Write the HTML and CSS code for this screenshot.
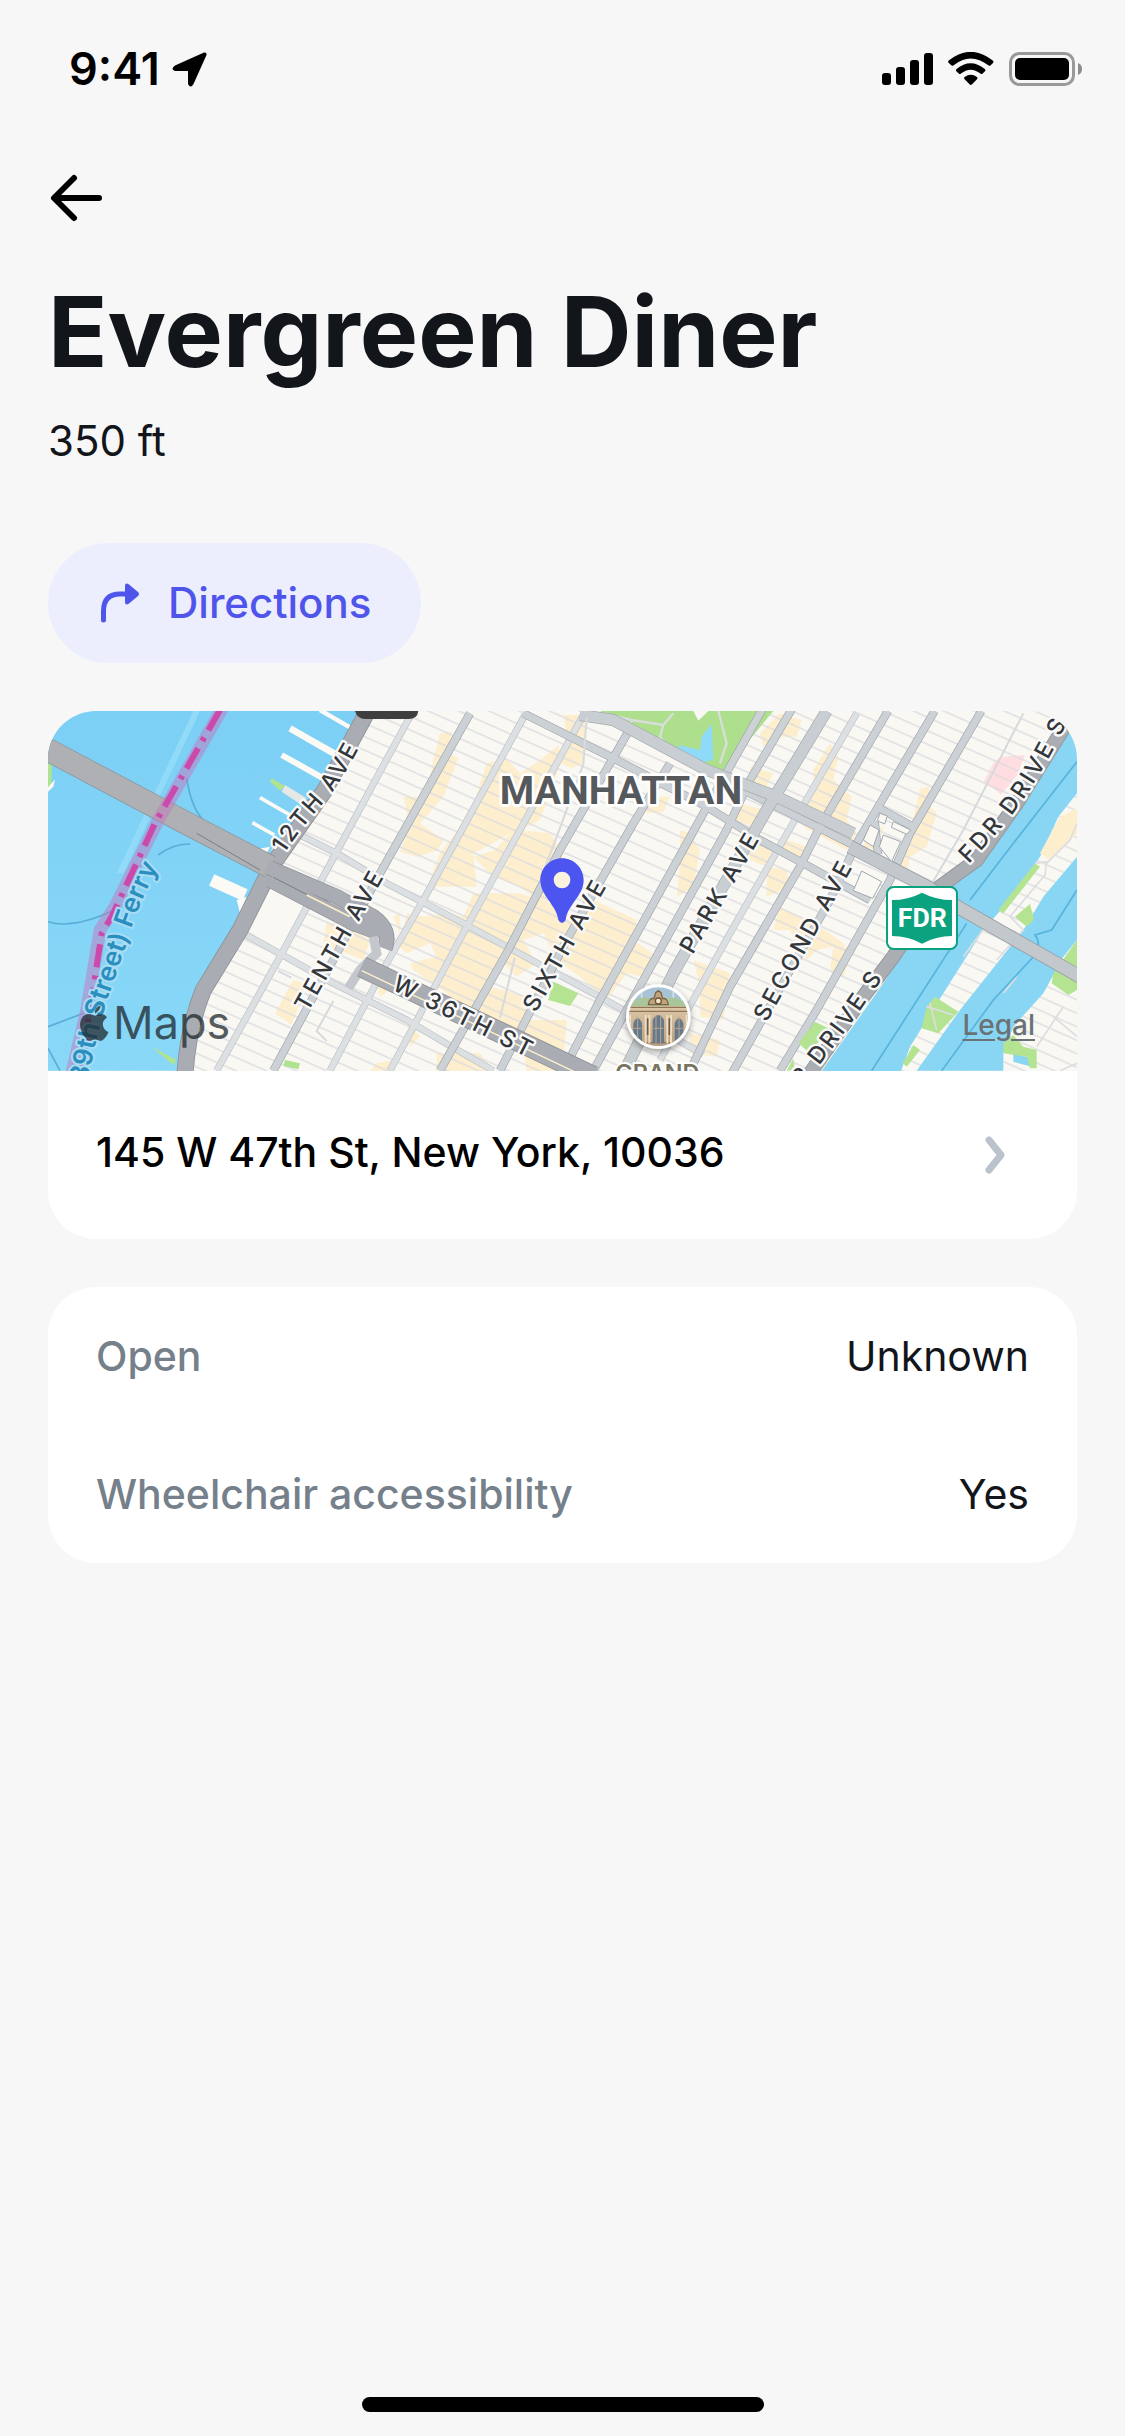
FILE: index.html
```html
<!DOCTYPE html>
<html lang="en">
<head>
<meta charset="utf-8">
<meta name="viewport" content="width=device-width, initial-scale=1">
<title>Evergreen Diner</title>
<link rel="stylesheet" href="styles.css">
</head>
<body>
<div class="screen">
  <header class="status">
    <div class="status-side">
      <span class="clock">9:41</span>
      <svg width="36" height="36" viewBox="0 0 36 36" aria-hidden="true"><path d="M3 14.500 32 1.500Q35 1 34.500 4L21.500 33Q18.500 38 16 33V20H3Q-2 18 3 14.500Z"/></svg>
    </div>
    <div class="status-side status-icons">
      <svg width="51" height="32" viewBox="0 0 51 32" aria-hidden="true"><rect y="20" width="9" height="12" rx="3"/><rect x="14" y="14" width="9" height="18" rx="3"/><rect x="28" y="7" width="9" height="25" rx="3"/><rect x="42" width="9" height="32" rx="3"/></svg>
      <svg width="46" height="34" viewBox="0 0 46 34" aria-hidden="true"><path d="M.7 8.600Q22.500-9 44.800 8.600Q46 9.800 45 11L42.400 13.500Q41.500 14.300 40.400 13.300Q22.500-.500 5.600 13.300Q4.600 14.300 3.600 13.500L.8 11Q-.4 9.800.7 8.600ZM8.600 17Q22.500 5.500 36.800 17Q38 18.200 37 19.300L34.400 21.800Q33.500 22.500 32.400 21.600Q22.500 14 13 21.600Q12 22.500 11 21.800L8.600 19.500Q7.400 18.200 8.600 17ZM16.600 25Q22.800 20.500 29 25Q30 26.200 29 27.300L23.800 32.500Q22.800 33.400 21.800 32.500L16.600 27.300Q15.600 26.200 16.600 25Z"/></svg>
      <svg width="73" height="34" viewBox="0 0 73 34" aria-hidden="true"><rect x="1.500" y="1.500" width="63" height="31" rx="9" fill="none" stroke="#999" stroke-width="3"/><rect x="6" y="6" width="54" height="22" rx="5"/><path d="M69 11Q73 12.500 73 17T69 23Z" fill="#8c8c8c"/></svg>
    </div>
  </header>

  <main class="content">
    <button class="back" type="button" aria-label="Back">
      <svg width="54" height="54" viewBox="0 0 54 54" aria-hidden="true"><path d="M26 7 6 27l20 20M7 27h44" fill="none" stroke="#000" stroke-width="6" stroke-linecap="round" stroke-linejoin="round"/></svg>
    </button>
    <h1 class="title">Evergreen Diner</h1>
    <p class="distance">350 ft</p>

    <button class="directions" type="button">
      <svg width="42" height="42" viewBox="0 0 42 42" aria-hidden="true"><path d="M5.500 38V29Q5.500 12 22 12H29" fill="none" stroke="currentColor" stroke-width="5" stroke-linecap="round"/><path d="M27 4Q27 0 31 2.500L40 10Q42 12 40 14L31 21.500Q27 24 27 20Z" fill="currentColor"/></svg>
      <span>Directions</span>
    </button>

    <section class="card place" aria-label="Location">
      <div class="map">
        <svg class="map-art" viewBox="0 0 3087 1080" preserveAspectRatio="xMidYMid slice" role="img" aria-label="Map of Manhattan">
          <defs>
            <pattern id="blocks" width="60" height="37" patternUnits="userSpaceOnUse" patternTransform="rotate(24)"><path d="M0 17H60" stroke="#dcdbe0" stroke-width="4"/></pattern>
            <linearGradient id="river" x1="0" y1="0" x2="0" y2="1"><stop offset="0" stop-color="#7ccff5"/><stop offset="1" stop-color="#89d8f8"/></linearGradient>
            <linearGradient id="stone" x1="0" y1="0" x2="0" y2="1"><stop offset="0" stop-color="#dcc7a6"/><stop offset="1" stop-color="#b99c7e"/></linearGradient>
            <clipPath id="badge"><circle cx="835" cy="950" r="88"/></clipPath>
            <filter id="drop" x="-30%" y="-30%" width="160%" height="160%"><feDropShadow dx="0" dy="8" stdDeviation="9" flood-opacity=".4"/></filter>
            <path id="ave12" d="M732 462Q785 382 850 310Q910 240 970 118L1000 50"/>
            <path id="aveTenth" d="M803 938 1080 446"/>
            <path id="ferry" d="M143 1152Q178 960 212 870L262 725Q290 620 372 466L400 410"/>
            <path id="w36" d="M34 868 520 1112"/>
            <path id="aveSixth" d="M468 940 750 434"/>
            <path id="avePark" d="M938 765 1190 330"/>
            <path id="aveSecond" d="M110 968 430 390"/>
            <path id="fdrNorth" d="M716 492Q790 415 850 340Q940 220 1015 60L1060-40"/>
            <path id="fdrSouth" d="M216 1162Q310 1045 385 940L530 730"/>
          </defs>
          <rect width="3087" height="1080" fill="#f9f8f3"/>

          <!-- commercial blocks -->
          <g fill="#fdeecd" transform="translate(996 -33)">
            <path d="M180 100 215 95 205 160 235 175 190 290 120 370 190 420 175 450 110 470 60 455 90 380 70 290 140 290 160 180Z"/>
            <path d="M320 190 380 175 420 220 480 180 535 135 545 180 480 360 420 390 510 400 550 460 500 620 420 560 340 530 280 470 345 450 390 400 320 440 280 460 290 560 170 560 130 590 180 460 250 370 280 320 300 250Z"/>
            <path d="M550 45 620 45 615 100 610 190 575 205 540 190 560 100Z"/>
            <path d="M280 580 420 580 540 620 600 670 640 600 770 660 760 720 830 770 790 830 740 820 680 900 600 830 530 780 490 700 430 720 470 790 410 830 370 790 330 860 440 890 450 960 560 960 550 1090 640 1112 440 1112 430 1050 300 980 200 880 100 810 90 790 170 770 150 730 80 760 60 740 80 640 130 650 200 640 250 650Z"/>
            <path d="M900 390 930 400 960 450 940 560 890 590 900 490ZM800 290 870 290 850 335 800 340ZM940 780 1050 820 1030 960 960 950 960 860ZM930 1000 1020 1020 1010 1070 930 1060ZM80 960 120 1010 90 1040ZM170 1060 300 1060 340 1112 170 1112Z"/>
          </g>
          <g fill="#fdeecd">
            <path transform="translate(-24 -33)" d="M860 670 900 670 990 720 970 780 920 760 850 730ZM760 840 800 850 780 910 755 975 705 940ZM1060 650 1080 640 1080 700ZM1010 1090 1060 1080 1050 1112 990 1112ZM1010 850 1050 870 1020 890Z"/>
            <path transform="translate(2046 -33)" d="M150 40 215 60 200 110 150 110 100 140 90 100ZM300 130 325 170 310 240 365 290 350 360 380 400 350 450 220 380 210 320 250 290 250 210ZM60 200 130 220 110 260 60 240ZM20 310 110 330 80 380 10 360ZM570 265 600 260 590 310 620 340 590 440 540 470 530 520 490 510 540 400ZM110 500 170 510 180 560 110 590ZM150 620 270 680 340 730 360 770 340 830 300 810 310 740 260 750 230 780 180 690 130 690ZM170 420 230 440 210 470 150 450ZM410 400 460 380 440 450 400 440ZM60 430 130 440 110 500 60 480Z"/>
          </g>
          <path fill="#ffdde0" d="M2855 138 2930 132 2910 190 2860 250 2807 213 2835 158Z"/>
          <rect width="3087" height="1080" fill="url(#blocks)"/>
          <path fill="#f9f8f3" d="M655 530 770 600 700 740 590 670Z"/>

          <!-- parks -->
          <g transform="translate(996 -33)">
            <path fill="#addf8d" d="M660 33H1180L1030 215 980 215 740 90Z"/>
            <path fill="#8fdaf8" d="M895 135 960 150 965 110 995 72 1000 180 960 188 900 160Z"/>
            <path fill="none" stroke="#d9dedb" stroke-width="7" d="M670 40 755 60 850 75 880 40M755 60 745 95M850 75 840 110 875 160M1015 33 1040 130 1020 190"/>
            <path fill="#f9f8f3" d="M940 33H985L955 62Z"/>
            <path fill="#b4e392" d="M520 845 595 880 570 918 505 900Z"/>
          </g>

          <!-- avenues and cross streets -->
          <g fill="none" stroke-linejoin="round">
            <g stroke="#bdc2c7" stroke-width="21">
              <path d="M1086 17 996 182 861 432 696 737 506 1079"/>
              <path d="M1431 12 1126 567 1016 757 846 1079"/>
              <path d="M1606 12 1256 647 1026 1079"/>
              <path d="M2426 7 2246 317 2046 667 1836 1047"/>
              <path d="M696 342 866 427 1016 517 1246 637 1636 847 1966 1030"/>
              <path d="M586 667 856 817 1076 927 1211 1007 1336 1079"/>
            </g>
            <g stroke="#dce0e3" stroke-width="17">
              <path d="M1086 17 996 182 861 432 696 737 506 1079"/>
              <path d="M1431 12 1126 567 1016 757 846 1079"/>
              <path d="M1606 12 1256 647 1026 1079"/>
              <path d="M2426 7 2246 317 2046 667 1836 1047"/>
              <path d="M696 342 866 427 1016 517 1246 637 1636 847 1966 1030"/>
              <path d="M586 667 856 817 1076 927 1211 1007 1336 1079"/>
            </g>
            <g stroke="#a0a6ac" stroke-width="25">
              <path d="M1266 7 996 487 926 617 676 1079"/>
              <path d="M1741 62 1536 417 1381 717 1176 1079"/>
              <path d="M1866 157 1756 337 1556 687 1356 1079"/>
              <path d="M2146-10 1966 307 1656 867 1546 1079"/>
              <path d="M2231-5 2106 207 2036 357 1736 897 1636 1079"/>
              <path d="M2520 0 2316 347 2256 467 2046 827 1926 1079"/>
              <path d="M2660 0 2426 397 2346 567 2050 1090"/>
              <path d="M2800 0 2586 367 2526 507 2306 897 2196 1079"/>
              <path d="M1426 7 1706 147 1976 287 2136 387 2266 457 2466 567M2086 237 2286 337 2426 407M2490 290 2600 350M2480 330 2490 430"/>
            </g>
            <g stroke="#ccd1d5" stroke-width="21">
              <path d="M1266 7 996 487 926 617 676 1079"/>
              <path d="M1741 62 1536 417 1381 717 1176 1079"/>
              <path d="M1866 157 1756 337 1556 687 1356 1079"/>
              <path d="M2146-10 1966 307 1656 867 1546 1079"/>
              <path d="M2231-5 2106 207 2036 357 1736 897 1636 1079"/>
              <path d="M2520 0 2316 347 2256 467 2046 827 1926 1079"/>
              <path d="M2660 0 2426 397 2346 567 2050 1090"/>
              <path d="M2800 0 2586 367 2526 507 2306 897 2196 1079"/>
              <path d="M1426 7 1706 147 1976 287 2136 387 2266 457 2466 567M2086 237 2286 337 2426 407M2490 290 2600 350M2480 330 2490 430"/>
            </g>
            <path stroke="#a3a8ae" stroke-width="36" d="M2336 0 2156 297 1876 787 1730 1079M1596 12 1696 27 1976 177 2186 257 2416 367"/>
            <path stroke="#c9ced2" stroke-width="32" d="M2336 0 2156 297 1876 787 1730 1079M1596 12 1696 27 1976 177 2186 257 2416 367"/>
            <path stroke="#d8d9dd" stroke-width="6" d="M2926 7 2746 357 2646 527 2600 640M1616 20 1606 160 1540 340 1480 500M1400 740 1356 920M856 870 806 960 836 990M690 780 730 800M2300 1000 2400 900"/>
          </g>

          <!-- Hudson side -->
          <g transform="translate(-24 -33)">
            <path fill="url(#river)" d="M24 33H970L930 90 850 260 700 440 640 560 590 660 480 870 410 1112H24Z"/>
            <path fill="#9adef9" d="M460 33 480 33 250 520 230 520Z" opacity=".7"/>
            <g stroke="#fbfaf5" fill="none">
              <path stroke-width="13" d="M840 30 935 85"/><path stroke-width="20" d="M750 85 890 165"/>
              <path stroke-width="18" d="M725 165 850 235"/><path stroke-width="11" d="M660 293 750 345M637 368 703 405"/>
              <path stroke-width="38" d="M515 540 615 585"/>
            </g>
            <path fill="#e6e8e6" d="M735 255 800 295 785 315 725 275Z"/><path fill="#b0e38f" d="M695 235 735 258 720 272 690 245ZM335 1040 410 1080 400 1095ZM24 190 36 195 34 260 24 260ZM735 1080 780 1090 775 1108 730 1098Z"/>
            <path fill="#fbfaf5" d="M640 450 690 440 670 480ZM590 600 620 590 600 640ZM24 262 45 238 40 260 24 275Z"/>
            <g fill="none" stroke="#5badd8" stroke-width="5"><path d="M440 235Q455 330 495 365M450 432Q400 430 355 465M24 665Q100 690 235 625M24 980 130 940M24 1045 60 1112"/></g>
            <path fill="none" stroke="#8c9096" stroke-width="51" d="M990 20 855 270 700 490 600 690 490 870Q445 980 435 1120"/>
            <path fill="none" stroke="#a9acb2" stroke-width="46" d="M990 20 855 270 700 490 600 690 490 870Q445 980 435 1120"/>
            <path fill="none" stroke="#8c9096" stroke-width="70" d="M15 145 440 370 690 500"/>
            <path fill="none" stroke="#8c9096" stroke-width="46" d="M680 500 890 590 1000 650Q1055 690 1035 745M690 540 940 670 1020 700"/>
            <path fill="none" stroke="#aeb0b4" stroke-width="66" d="M15 145 440 370 690 500"/>
            <path fill="none" stroke="#a9acb2" stroke-width="42" d="M680 500 890 590 1000 650Q1055 690 1035 745M690 540 940 670 1020 700"/>
            <path fill="none" stroke="#797d82" stroke-width="3" d="M470 400 660 510M700 532 940 655"/>
            <path fill="none" stroke="#fcf2cf" stroke-width="5" d="M800 585 930 650"/>
            <path fill="none" stroke="#c4c8cd" stroke-width="28" d="M1000 710 1010 760 960 810 925 865"/>
            <path fill="none" stroke="#8c9096" stroke-width="64" d="M965 800 1660 1130"/>
            <path fill="none" stroke="#a9acb2" stroke-width="59" d="M965 800 1660 1130"/>
            <path fill="none" stroke="#fcf2cf" stroke-width="4" d="M965 812 1660 1142"/>
            <path fill="none" stroke="#c277bd" stroke-opacity=".5" stroke-width="38" d="M550 20 355 360 225 620 180 690 140 930 95 1120"/>
            <path fill="none" stroke="#ca49ab" stroke-width="18" stroke-dasharray="70 25 12 25" d="M540 30 345 370 215 650 185 700 150 930 120 1120"/>
          </g>

          <!-- East River side -->
          <g transform="translate(2046 -33)">
            <path fill="#88d6f4" d="M1041 60 870 330 750 480 650 560 460 850 270 1120H510L540 1040 640 880 760 690 830 610 930 470 985 350 1041 280Z"/>
            <path fill="#88d6f4" d="M1041 470 940 590 880 690 690 930 560 1112H820V1060L850 980 940 880 1000 770 1041 720Z"/>
            <path fill="#88d6f4" d="M850 1060 905 1075 905 1100 850 1085Z"/>
            <path fill="#fdeecd" d="M1041 325 990 350 930 460 960 480 1041 400Z"/>
            <path fill="#b4e392" d="M915 490 930 500 820 640 805 630ZM855 650 900 612 912 660 890 680ZM615 890 685 935 625 1000 575 985 590 920ZM550 1035 570 1050 530 1100 518 1090ZM970 820 1041 720V870L1015 885 965 850ZM255 965 295 985 240 1060 205 1030ZM190 1075 195 1112H170ZM820 1030 850 1005 880 1040 920 1050V1105L900 1105 890 1070 820 1060Z"/>
            <path fill="none" stroke="#dddde0" stroke-width="5" d="M915 490 950 485 945 525 840 650 880 690 800 780M1041 370 1020 420 950 490M780 660 700 770M590 920 670 945M620 990 600 910M820 880 860 830M970 950 1041 1010M1000 920 920 1040M1041 1090 990 1112"/>
            <path fill="none" stroke="#58b3dc" stroke-width="5" d="M1041 185 850 430 720 600M710 670 425 1112M1041 570 965 690 915 705Q935 730 915 765L790 900 635 1112"/>
            <path fill="none" stroke="#95989d" stroke-width="44" d="M1010 70 860 310 740 480 630 560 490 770 400 890 240 1120"/>
            <path fill="none" stroke="#aaadb2" stroke-width="38" d="M1010 70 860 310 740 480 630 560 490 770 400 890 240 1120"/>
            <path fill="none" stroke="#989da3" stroke-width="42" d="M360 440 590 560 690 625 1050 830"/>
            <path fill="none" stroke="#c3c8cd" stroke-width="37" d="M360 440 590 560 690 625 1050 830"/>
            <path fill="#f9f8f3" stroke="#a3a8ae" stroke-width="3" d="M450 340 472 348 464 372 442 362ZM490 365 542 390 530 403 484 382ZM460 405 512 425 485 485 448 440ZM395 513 455 545 428 595 370 572ZM420 375 447 390 430 440 400 420Z"/>
          </g>
          <path fill="#3f3f40" d="M921 0H1111Q1108 24 1082 24H952Q928 24 921 0Z"/>

          <!-- labels -->
          <g class="road">
            <g transform="translate(-24 -33)"><text><textPath href="#ave12">12TH AVE</textPath></text><text><textPath href="#aveTenth">TENTH AVE</textPath></text></g>
            <g transform="translate(996 -33)"><text><textPath href="#w36">W 36TH ST</textPath></text><text><textPath href="#aveSixth">SIXTH AVE</textPath></text><text><textPath href="#avePark">PARK AVE</textPath></text></g>
            <g transform="translate(2046 -33)"><text><textPath href="#aveSecond">SECOND AVE</textPath></text><text><textPath href="#fdrNorth">FDR DRIVE S</textPath></text><text><textPath href="#fdrSouth">R DRIVE S</textPath></text></g>
          </g>
          <text class="ferry" transform="translate(-24 -33)"><textPath href="#ferry">39th Street) Ferry</textPath></text>
          <text class="borough" x="1719" y="279" text-anchor="middle">MANHATTAN</text>

          <!-- station badge -->
          <g transform="translate(996 -33)">
            <circle cx="835" cy="950" r="97" fill="#fff" filter="url(#drop)"/>
            <g clip-path="url(#badge)">
              <rect x="740" y="860" width="190" height="180" fill="#a9c3d6"/>
              <path d="M760 860V910M785 860V910M880 860V910M905 860V910" stroke="#d5e2ea" stroke-width="5"/>
              <path fill="#a8c69a" d="M745 912 780 893H890L925 912V922H745Z"/>
              <rect x="740" y="918" width="190" height="120" fill="url(#stone)"/>
              <path d="M745 922H925M745 934H925M745 1028H925" stroke="#8f7558" stroke-width="4"/>
              <path fill="#66788a" d="M760 1030V970Q773 940 786 970V1030ZM818 1030V960Q835 930 852 960V1030ZM884 1030V970Q897 940 910 970V1030Z"/>
              <path d="M797 945V1030M808 945V1030M862 945V1030M873 945V1030M750 945V1030M920 945V1030" stroke="#f0dfc0" stroke-width="6"/>
              <path d="M803 955V1005M868 955V1005" stroke="#6d5c4b" stroke-width="5"/>
              <path d="M773 950V1030M828 945V1030M842 945V1030M897 950V1030M762 985H784M820 985H850M886 985H908" stroke="#b7a78e" stroke-width="3"/>
              <path fill="#c2a47c" stroke="#7d6346" stroke-width="4" d="M805 914Q808 893 822 896L827 878 835 872 843 878 848 896Q862 893 865 914Z"/>
              <circle cx="835" cy="903" r="9" fill="#f3e7c6" stroke="#6d563c" stroke-width="4"/>
            </g>
            <text class="station" x="832" y="1143" text-anchor="middle">GRAND</text>
          </g>

          <!-- highway shield -->
          <g transform="translate(2046 -33)">
            <rect x="471" y="561" width="210" height="186" rx="20" fill="#fff" stroke="#0ba37f" stroke-width="6"/>
            <path fill="#0ba37f" d="M486 600Q535 600 576 578Q618 600 666 600V708Q618 708 576 731Q535 708 486 708Z"/>
            <text class="shield" x="577" y="682" text-anchor="middle">FDR</text>
          </g>

          <!-- pin -->
          <g transform="translate(996 -33)">
            <path fill="#4c55f0" d="M546 475C510 475 481 504 481 541C481 588 530 615 535 660Q546 678 557 660C562 615 611 588 611 541C611 504 582 475 546 475Z"/>
            <circle cx="546" cy="540" r="25" fill="#fbf3e0"/>
          </g>
        </svg>
        <div class="map-brand">
          <svg width="29" height="36" viewBox="0 0 29 36" aria-hidden="true"><path d="M20.500 0Q21 5 15 8.500Q14 3.500 20.500 0ZM27 12.500Q20.500 17 24 23.500Q25.500 26 28.500 27Q26 33 22.500 35.200Q20 36.500 17.500 35Q15 33.800 12.500 35Q9.500 36.700 7.500 35Q0 28 0 19Q1 9.500 9 9Q11.500 9 15 10.800Q23 6.500 27 12.500Z"/></svg>
          <span>Maps</span>
        </div>
        <a class="legal" href="#legal">Legal</a>
      </div>
      <a class="address" href="#directions">
        <span>145 W 47th St, New York, 10036</span>
        <svg width="28" height="54" viewBox="0 0 28 54" aria-hidden="true"><path d="M6 12 18 27 6 42" fill="none" stroke="#bac2cb" stroke-width="7" stroke-linecap="round" stroke-linejoin="round"/></svg>
      </a>
    </section>

    <dl class="card facts">
      <div class="fact"><dt>Open</dt><dd>Unknown</dd></div>
      <div class="fact"><dt>Wheelchair accessibility</dt><dd>Yes</dd></div>
    </dl>
  </main>
  <div class="home-bar"></div>
</div>
</body>
</html>
```
FILE: styles.css
```css
* {
  box-sizing: border-box;
}

body {
  margin: 0;
  background: #f7f7f7;
  color: #12151a;
  font: 400 42px/48px Inter, "Liberation Sans", sans-serif;
}

button {
  border: 0;
  font: inherit;
  cursor: pointer;
}

svg {
  display: block;
  flex: none;
}

.screen {
  display: flex;
  flex-direction: column;
  min-height: 100vh;
}

.status {
  display: flex;
  justify-content: space-between;
  align-items: center;
  height: 138px;
  padding: 0 43px 0 69px;
  color: #000;
}

.status-side {
  display: flex;
  align-items: center;
  gap: 12px;
}

.status-icons {
  gap: 15px;
}

.clock {
  font-size: 45px;
  font-weight: 600;
}

.content {
  flex: 1;
  display: flex;
  flex-direction: column;
  align-items: flex-start;
  padding: 33px 48px 48px;
}

.back {
  padding: 0;
  background: none;
}

.title {
  margin: 47px 0 0;
  font-size: 98px;
  line-height: 120px;
  font-weight: 700;
}

.distance {
  margin: 25px 0 0;
}

.directions {
  display: flex;
  align-items: center;
  gap: 28px;
  height: 120px;
  margin: 78px 0 48px;
  padding: 0 50px;
  border-radius: 60px;
  background: #edeefd;
  color: #4f55ea;
  font-weight: 500;
}

.card {
  align-self: stretch;
  overflow: hidden;
  border-radius: 48px;
  background: #fff;
}

.map {
  position: relative;
}

.map-art {
  width: 100%;
  height: 360px;
}

.map-art text {
  font-family: Inter, "Liberation Sans", sans-serif;
  paint-order: stroke;
  stroke-linejoin: round;
}

.road {
  font-size: 70px;
  font-weight: 500;
  letter-spacing: 9px;
  fill: #34373a;
  stroke: #fafafa;
  stroke-width: 14px;
}

.ferry {
  font-size: 80px;
  font-weight: 600;
  fill: #2a8fc0;
  stroke: #a8dcf3;
  stroke-width: 12px;
}

.map-art .borough {
  font-family: Roboto, sans-serif;
  font-size: 118px;
  font-weight: 700;
  fill: #55595c;
  stroke: #fff;
  stroke-width: 16px;
}

.station {
  font-size: 70px;
  font-weight: 600;
  fill: #78745f;
  stroke: #fff;
  stroke-width: 12px;
}

.map-art .shield {
  font-family: Roboto, sans-serif;
  font-size: 80px;
  font-weight: 700;
  fill: #fff;
}

.map-brand {
  position: absolute;
  left: 32px;
  bottom: 24px;
  display: flex;
  align-items: center;
  gap: 4px;
  color: rgba(30, 40, 45, .75);
  fill: rgba(30, 40, 45, .75);
  font-size: 45px;
}

.legal {
  position: absolute;
  right: 42px;
  bottom: 30px;
  color: #6b7276;
  font-size: 28px;
  line-height: 32px;
  font-weight: 500;
  text-underline-offset: 4px;
}

.address {
  display: flex;
  justify-content: space-between;
  align-items: flex-start;
  padding: 57px 66px 57px 48px;
  color: #000;
  font-size: 41px;
  font-weight: 500;
  text-decoration: none;
}

.facts {
  margin: 48px 0 0;
  font-size: 41px;
}

.fact {
  display: flex;
  justify-content: space-between;
  align-items: center;
  min-height: 138px;
  padding: 0 48px;
}

.fact dt {
  color: #75808b;
  font-weight: 500;
}

.fact dd {
  margin: 0;
}

.home-bar {
  align-self: center;
  width: 402px;
  height: 15px;
  margin-bottom: 24px;
  border-radius: 8px;
  background: #000;
}
```
